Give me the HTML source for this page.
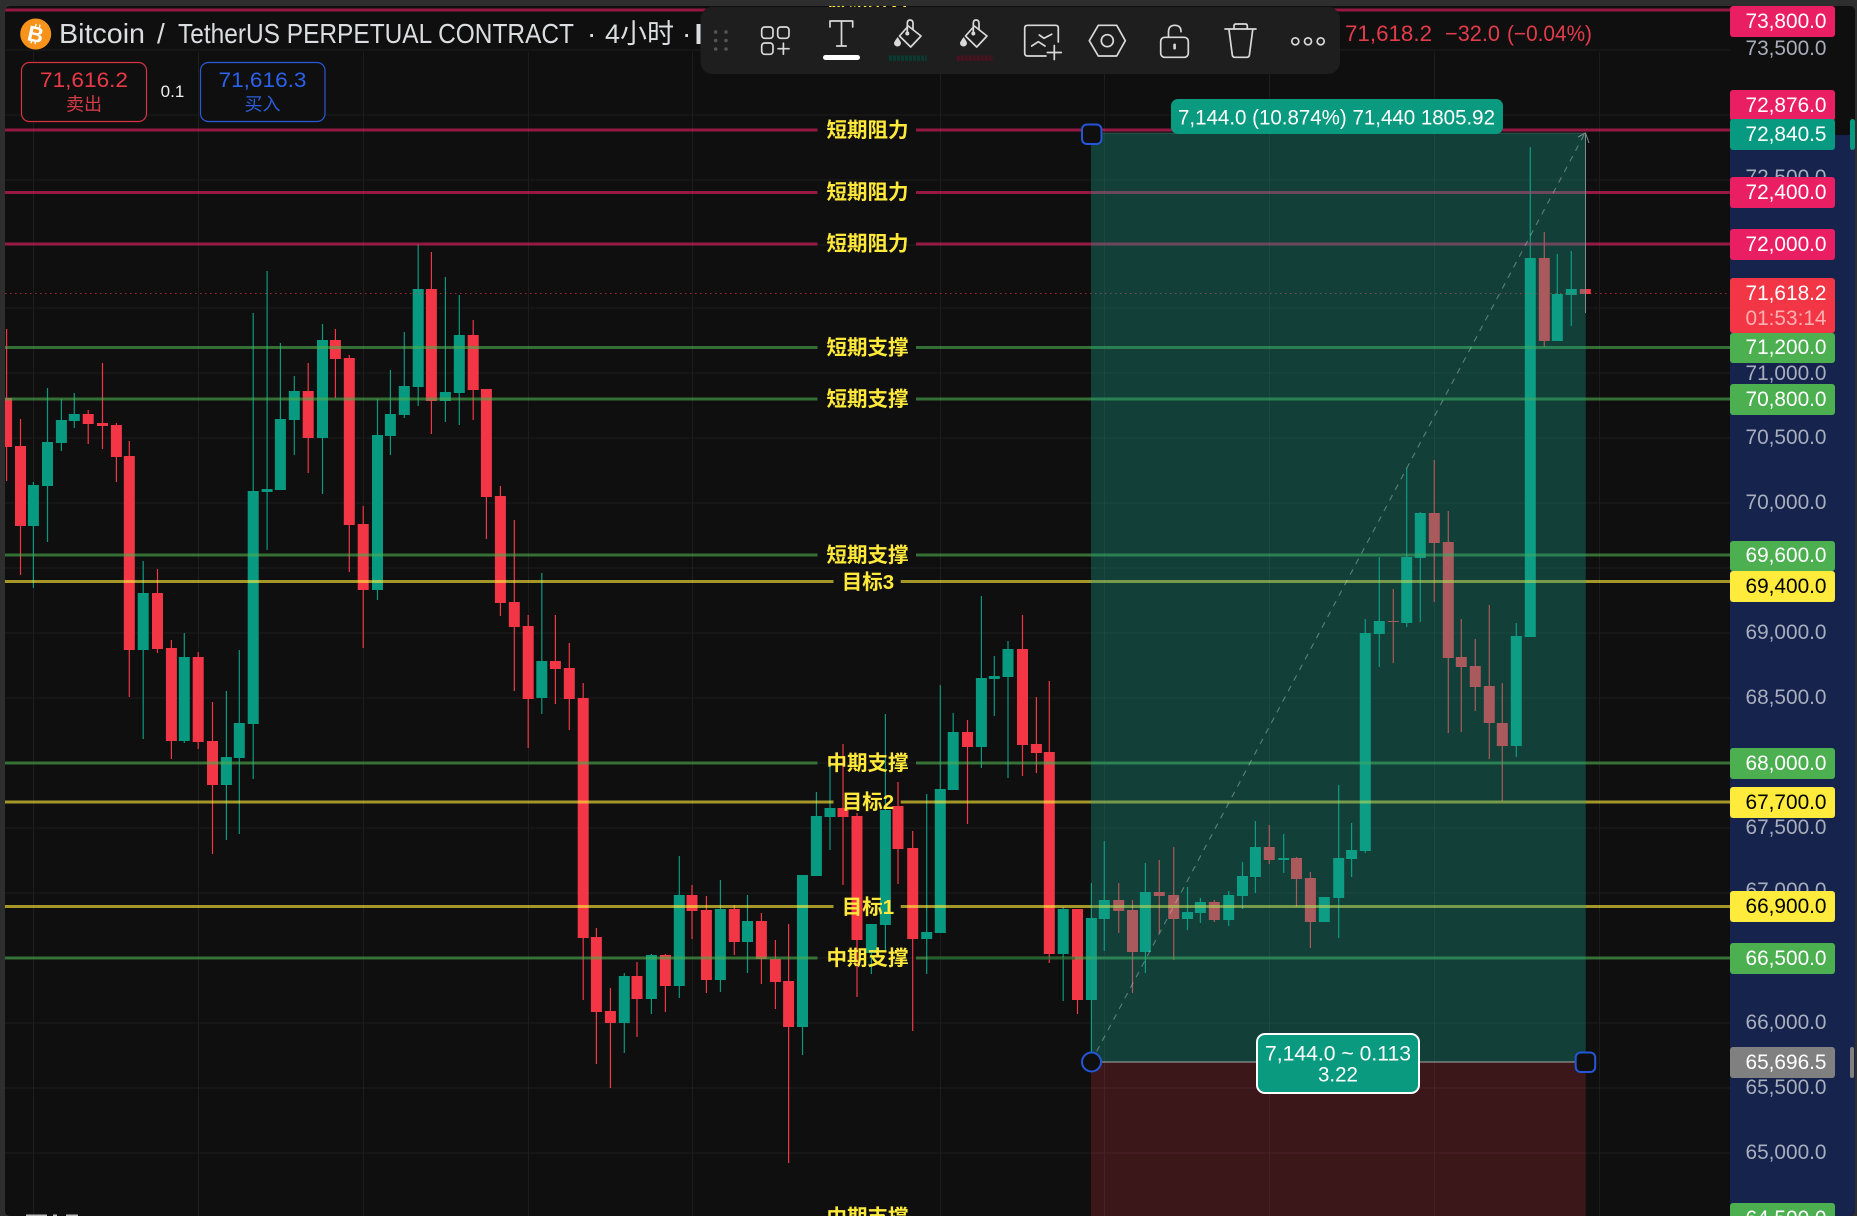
<!DOCTYPE html>
<html lang="zh">
<head>
<meta charset="utf-8">
<title>Bitcoin / TetherUS</title>
<style>
html,body{margin:0;padding:0;background:#2e2e2e;width:1857px;height:1216px;overflow:hidden}
svg{display:block;font-family:"Liberation Sans","Noto Sans CJK SC",sans-serif;filter:blur(.35px)}
.a{font-size:21.5px;fill:#a9aebd;text-anchor:middle}
.p{font-size:21.5px;fill:#fff;text-anchor:middle}
.k{fill:#000}
.l{font-size:20.5px;font-weight:bold;fill:#ffe93b;text-anchor:middle}
.i{fill:none;stroke:#d9d9d9;stroke-width:1.7;stroke-linecap:round;stroke-linejoin:round}
</style>
</head>
<body>
<svg width="1857" height="1216" viewBox="0 0 1857 1216" xmlns="http://www.w3.org/2000/svg">
<defs><clipPath id="c"><rect x="5" y="6" width="1850" height="1210" rx="5"/></clipPath></defs>
<rect width="1857" height="1216" fill="#2e2e2e"/>
<g clip-path="url(#c)">
<rect x="5" y="6" width="1850" height="1210" fill="#0f0f0f"/>
<rect x="1730" y="135" width="125" height="1081" fill="#15234d"/>

<!-- grid -->
<path fill="none" stroke="#ffffff" stroke-opacity=".06" stroke-width="1" d="M5 50H1730M5 115H1730M5 180H1730M5 245H1730M5 308H1730M5 373H1730M5 438H1730M5 503H1730M5 568H1730M5 633H1730M5 698H1730M5 763H1730M5 828H1730M5 893H1730M5 958H1730M5 1023H1730M5 1088H1730M5 1153H1730M33.5 52V1216M198.5 52V1216M363.5 52V1216M528.5 52V1216M692.5 52V1216M940.5 52V1216M1104.5 52V1216M1269.5 52V1216M1434.5 52V1216M1599.5 52V1216"/>

<!-- red wicks -->
<path fill="none" stroke="#f23645" stroke-width="1.2" d="M6.6 329V481M20.5 419V575M88.2 410V444M102.5 363V449M116.4 423V482M129.3 441V697M157.5 569V653M171.4 640V759M198.2 652V749M212.5 702V854M308.2 363V473M335.4 329V398M349.3 355V572M363.2 506V648M431.4 252V434M473.2 320V420M486.4 389V539M500.4 486V616M514.3 520V691M528.2 615V748M555.4 615V704M569.3 643V730M583.2 683V1000M596.4 928V1064M610.4 988V1088M637 962V1037M665.4 954V1012M692 885V939M706.4 896V993M734.3 905V955M761.4 913V984M775.4 940V1009M788.6 924V1163M843 744V885M857 813V997M898 782V884M912.7 831V1031M967.5 720V824M1022.5 615V776M1036.4 697V773M1049.3 681V963M1077.5 909V1014M1118.7 883V933M1132.5 900V993M1159.3 860V933M1173.7 847V960M1214.3 900V922M1269.3 825V864M1296.5 857V907M1310.4 872V948M1393.3 589V663M1434.3 460V602M1448.3 511V733M1461.3 619V732M1475.3 639V711M1489.3 605V759M1502.3 683V801M1544.3 232V347"/>
<!-- red bodies -->
<path fill="none" stroke="#f23645" stroke-width="11" d="M6.6 398V447M20.5 446V526M88.2 414V424M102.5 423V426M116.4 425V457M129.3 456V650M157.5 593V649M171.4 648V741M198.2 657V742M212.5 741V785M308.2 391V438M335.4 340V359M349.3 358V525M363.2 524V590M431.4 289V401M473.2 335V390M486.4 389V497M500.4 496V603M514.3 602V627M528.2 626V699M555.4 661V669M569.3 668V699M583.2 698V938M596.4 937V1012M610.4 1011V1023M637 976V999M665.4 955V986M692 895V911M706.4 910V980M734.3 909V942M761.4 921V959M775.4 959V982M788.6 981V1027M843 808V817M857 816V940M898 806V849M912.7 848V939M967.5 732V747M1022.5 649V745M1036.4 744V753M1049.3 752V954M1077.5 909V1000M1118.7 900V911M1132.5 910V952M1159.3 892V896M1173.7 895V919M1214.3 902V920M1269.3 847V860M1296.5 858V879M1310.4 878V922M1393.3 621V622M1434.3 513V543M1448.3 542V658M1461.3 657V667M1475.3 666V687M1489.3 686V723M1502.3 723V746M1544.3 258V341M1585.3 289V294"/>
<!-- green wicks -->
<path fill="none" stroke="#089981" stroke-width="1.2" d="M33.4 482V588M47.5 388V542M61.4 399V451M74.3 393V428M143.2 561V739M184.3 633V743M226.4 691V840M239.3 650V834M253.2 313V779M267.1 271V550M280.4 343V490M294.3 376V455M322.5 324V494M377.5 399V600M390.4 370V455M404.3 332V418M418.2 244V406M445.4 277V422M459.3 295V425M541.8 573V714M624.3 973V1053M651.4 954V1014M679.3 856V998M720.4 880V992M747.5 895V973M802.5 875V1055M816.4 792V876M830 758V850M871.4 924V974M885.4 714V950M926.7 794V974M940.3 685V933M953.2 713V790M981.4 596V768M994.3 656V716M1008 641V778M1063.2 907V1001M1091.4 883V1053M1104.3 841V951M1145.4 863V973M1187.5 887V930M1200.4 898V923M1228.7 891V926M1242.5 862V909M1255.4 821V893M1283.7 834V873M1338.7 785V938M1351.6 823V877M1365.3 619V853M1379.3 557V667M1406.7 468V627M1420.3 512V622M1516.3 623V757M1530.3 147V637M1557.3 254V341M1571.3 251V326"/>
<!-- green bodies -->
<path fill="none" stroke="#089981" stroke-width="11" d="M33.4 485V526M47.5 442V486M61.4 420V443M74.3 414V421M143.2 593V650M184.3 657V741M226.4 757V785M239.3 723V758M253.2 491V724M267.1 489V492M280.4 419V490M294.3 391V420M322.5 340V438M377.5 435V590M390.4 414V436M404.3 386V415M418.2 289V387M445.4 392V401M459.3 335V393M541.8 661V698M624.3 976V1023M651.4 955V999M679.3 895V986M720.4 909V980M747.5 921V942M802.5 875V1027M816.4 816V876M830 808V817M871.4 924V953M885.4 810V925M926.7 932V939M940.3 789V933M953.2 732V790M981.4 678V747M994.3 676V679M1008 649V677M1063.2 909V954M1091.4 918V1000M1104.3 900V919M1145.4 892V952M1187.5 912V919M1200.4 902V913M1228.7 895V920M1242.5 876V896M1255.4 847V877M1283.7 858V860M1324.3 897V922M1338.7 858V898M1351.6 850V859M1365.3 633V851M1379.3 621V634M1406.7 557V623M1420.3 513V558M1516.3 636V746M1530.3 258V637M1557.3 294V341M1571.3 289V295"/>

<!-- dotted last price line -->
<path d="M5 293.5H1730" stroke="#f23645" stroke-opacity=".65" stroke-width="1" stroke-dasharray="1.5 3.5"/>

<!-- horizontal levels -->
<path fill="none" stroke="#e91e63" stroke-opacity=".62" stroke-width="3" d="M5 10H1730M5 130H817.5M916 130H1730M5 192.5H817.5M916 192.5H1730M5 244H817.5M916 244H1730"/>
<path fill="none" stroke="#4caf50" stroke-opacity=".6" stroke-width="3" d="M5 347.5H817.5M916 347.5H1730M5 399H817.5M916 399H1730M5 555H817.5M916 555H1730M5 763H817.5M916 763H1730M5 958H817.5M916 958H1730"/>
<path fill="none" stroke="#ffeb3b" stroke-opacity=".62" stroke-width="3" d="M5 581.5H833.5M900.7 581.5H1730M5 802H833.5M900.7 802H1730M5 906.5H833.5M900.7 906.5H1730"/>
<path d="M928 958.5H1075" stroke="#0a3a20" stroke-opacity=".35" stroke-width="3"/>

<!-- long/short position overlay -->
<rect x="1091" y="133" width="494.7" height="929" fill="#18a48b" fill-opacity=".33"/>
<rect x="1091" y="1062" width="494.7" height="154" fill="#f23645" fill-opacity=".2"/>
<path d="M1091 1062L1585 133" fill="none" stroke="#c6d6d2" stroke-opacity=".42" stroke-width="1.1" stroke-dasharray="6 6"/>
<path d="M1578 137L1585.5 133L1589 143M1585.5 133V313" fill="none" stroke="#7d8c88" stroke-width="1"/>
<path d="M1091 133H1585" stroke="#9aa8a4" stroke-opacity=".25" stroke-width="1"/>
<path d="M1091 1062H1585.5" stroke="#a8a8a8" stroke-width="1"/>

<!-- level labels -->
<text class="l" x="867.5" y="9">短期阻力</text>
<text class="l" x="867.5" y="137">短期阻力</text>
<text class="l" x="867.5" y="199">短期阻力</text>
<text class="l" x="867.5" y="250.5">短期阻力</text>
<text class="l" x="867.5" y="354.5">短期支撑</text>
<text class="l" x="867.5" y="406">短期支撑</text>
<text class="l" x="867.5" y="562">短期支撑</text>
<text class="l" x="868" y="589">目标3</text>
<text class="l" x="867.5" y="770">中期支撑</text>
<text class="l" x="868" y="809">目标2</text>
<text class="l" x="868" y="914">目标1</text>
<text class="l" x="867.5" y="965">中期支撑</text>
<text class="l" x="867.5" y="1224">中期支撑</text>

<!-- header -->
<circle cx="35.7" cy="34" r="15.5" fill="#f7931a"/>
<text x="35.7" y="42" font-size="22" font-weight="bold" fill="#fff" text-anchor="middle" transform="rotate(12 35.7 34)">B</text>
<path d="M34 24v3M38 24v3M33 41v3M37 41v3" stroke="#fff" stroke-width="1.4" transform="rotate(12 35.7 34)"/>
<text x="59" y="43" font-size="28" fill="#dcdde0" textLength="86" lengthAdjust="spacingAndGlyphs">Bitcoin</text>
<text x="157" y="43" font-size="28" fill="#dcdde0">/</text>
<text x="178" y="43" font-size="28" fill="#dcdde0" textLength="396" lengthAdjust="spacingAndGlyphs">TetherUS PERPETUAL CONTRACT</text>
<text x="587" y="43" font-size="28" fill="#dcdde0">·</text>
<text x="605" y="43" font-size="27" fill="#dcdde0" textLength="69" lengthAdjust="spacingAndGlyphs">4小时</text>
<text x="682" y="43" font-size="28" fill="#dcdde0">·</text>
<rect x="696.5" y="24" width="4" height="20" fill="#dcdde0"/>

<rect x="21.5" y="62.5" width="125" height="59" rx="8" fill="#0f0f0f" stroke="#d6323f" stroke-width="1.2"/>
<text x="84" y="87" font-size="21.5" fill="#ea3a48" text-anchor="middle" textLength="88" lengthAdjust="spacingAndGlyphs">71,616.2</text>
<text x="84" y="110.5" font-size="18" fill="#d23a46" text-anchor="middle">卖出</text>
<text x="172.5" y="97" font-size="17" fill="#efefef" text-anchor="middle">0.1</text>
<rect x="200.5" y="62.5" width="124.5" height="59" rx="8" fill="#0f0f0f" stroke="#2a59d8" stroke-width="1.2"/>
<text x="262.5" y="87" font-size="21.5" fill="#2b62ea" text-anchor="middle" textLength="88" lengthAdjust="spacingAndGlyphs">71,616.3</text>
<text x="262.5" y="110.5" font-size="18" fill="#2b5fd9" text-anchor="middle">买入</text>

<text x="1345" y="41" font-size="22" fill="#e23c4b" textLength="87" lengthAdjust="spacingAndGlyphs">71,618.2</text>
<text x="1445" y="41" font-size="22" fill="#e23c4b" textLength="55" lengthAdjust="spacingAndGlyphs">−32.0</text>
<text x="1507" y="41" font-size="22" fill="#e23c4b" textLength="85" lengthAdjust="spacingAndGlyphs">(−0.04%)</text>

<!-- toolbar -->
<rect x="700.5" y="7" width="639.5" height="67" rx="12" fill="#1e1e1e"/>
<g fill="#555">
<circle cx="715.7" cy="32" r="1.8"/><circle cx="726" cy="32" r="1.8"/>
<circle cx="715.7" cy="40.5" r="1.8"/><circle cx="726" cy="40.5" r="1.8"/>
<circle cx="715.7" cy="49" r="1.8"/><circle cx="726" cy="49" r="1.8"/>
</g>
<g class="i">
<rect x="761.7" y="27" width="11.3" height="11.3" rx="3"/>
<rect x="777.7" y="27" width="11.3" height="11.3" rx="3"/>
<rect x="761.7" y="43" width="11.3" height="11.3" rx="3"/>
<path d="M778 48.7H789M783.4 43.2V54.2"/>
<path d="M830 27V21H852.7V27M841.5 21V46M836.7 46H846.2"/>
<!-- bucket 1 -->
<path d="M908.3 26L921 36L910.7 47L899.5 36Z"/>
<path d="M907.3 33V23.5Q907.3 20 910 20Q913 20 913 23.5V29"/>
<!-- bucket 2 -->
<path d="M974.3 26L987 36L976.7 47L965.5 36Z"/>
<path d="M973.3 33V23.5Q973.3 20 976 20Q979 20 979 23.5V29"/>
<!-- chart plus -->
<path d="M1058.3 42V28Q1058.3 25.3 1055.5 25.3H1027.7Q1024.7 25.3 1024.7 28V53Q1024.7 56 1027.7 56H1046"/>
<path d="M1039.3 35L1044 38.3L1051.7 34.3M1031.7 46L1038.3 41.7L1045 46M1054.3 45.5V59.5M1047.3 52.5H1061.3"/>
<!-- hexagon -->
<path d="M1089.3 40.7L1098.3 25.3H1116.7L1125.3 40.7L1116.7 56H1098.3Z"/>
<circle cx="1107.3" cy="40.7" r="6"/>
<!-- unlock -->
<rect x="1160.7" y="37.3" width="27.6" height="20" rx="4"/>
<path d="M1168.5 37V32Q1168.5 25.3 1174.8 25.3Q1181 25.3 1181 31.7"/>
<!-- trash -->
<path d="M1225 29H1256M1234 28V26Q1234 24 1236 24H1245.3Q1247.3 24 1247.3 26V28M1229 30L1232.3 55Q1232.6 57.3 1235 57.3H1246.7Q1249 57.3 1249.4 55L1252.7 30"/>
<!-- more -->
<circle cx="1295.3" cy="41.3" r="3.5"/><circle cx="1308" cy="41.3" r="3.5"/><circle cx="1320.7" cy="41.3" r="3.5"/>
</g>
<circle cx="907.3" cy="33.5" r="2" fill="#d9d9d9"/>
<circle cx="973.3" cy="33.5" r="2" fill="#d9d9d9"/>
<path d="M897.7 37Q894 42 894 43A3.5 3.5 0 0 0 901 43Q901 42 897.7 37Z" fill="#d9d9d9"/>
<path d="M963.7 37Q960 42 960 43A3.5 3.5 0 0 0 967 43Q967 42 963.7 37Z" fill="#d9d9d9"/>
<rect x="823" y="55" width="37" height="5" rx="2.5" fill="#fff"/>
<path d="M889 58.3H926.7" stroke="#093a2f" stroke-width="5.5" stroke-dasharray="3 1"/>
<path d="M956.7 58.3H993.3" stroke="#4a1220" stroke-width="5.5" stroke-dasharray="3 1"/>
<rect x="1173.3" y="43.5" width="2.6" height="6" rx="1.3" fill="#d9d9d9"/>

<!-- measure labels and handles -->
<rect x="1171" y="99" width="332" height="35" rx="7" fill="#0a9a80"/>
<text x="1178" y="124.5" font-size="21.5" fill="#fff" textLength="317" lengthAdjust="spacingAndGlyphs">7,144.0 (10.874%) 71,440 1805.92</text>
<rect x="1082" y="124.5" width="19.5" height="19.5" rx="5" fill="#0f0f0f" stroke="#2456d8" stroke-width="2"/>
<circle cx="1091.5" cy="1062" r="9.5" fill="#0f0f0f" stroke="#2456d8" stroke-width="2"/>
<rect x="1575.7" y="1052.5" width="19.5" height="19.5" rx="5" fill="#0f0f0f" stroke="#2456d8" stroke-width="2"/>
<rect x="1257" y="1034" width="162" height="59" rx="8" fill="#0a9a80" stroke="#fff" stroke-width="2"/>
<text x="1338" y="1060.5" font-size="21.5" fill="#fff" text-anchor="middle" textLength="146" lengthAdjust="spacingAndGlyphs">7,144.0 ~ 0.113</text>
<text x="1338" y="1081.5" font-size="21.5" fill="#fff" text-anchor="middle" textLength="40" lengthAdjust="spacingAndGlyphs">3.22</text>

<!-- axis ticks -->
<text class="a" x="1786" y="55" textLength="81" lengthAdjust="spacingAndGlyphs">73,500.0</text>
<text class="a" x="1786" y="184" textLength="81" lengthAdjust="spacingAndGlyphs">72,500.0</text>
<text class="a" x="1786" y="380" textLength="81" lengthAdjust="spacingAndGlyphs">71,000.0</text>
<text class="a" x="1786" y="444" textLength="81" lengthAdjust="spacingAndGlyphs">70,500.0</text>
<text class="a" x="1786" y="509" textLength="81" lengthAdjust="spacingAndGlyphs">70,000.0</text>
<text class="a" x="1786" y="639" textLength="81" lengthAdjust="spacingAndGlyphs">69,000.0</text>
<text class="a" x="1786" y="704" textLength="81" lengthAdjust="spacingAndGlyphs">68,500.0</text>
<text class="a" x="1786" y="834" textLength="81" lengthAdjust="spacingAndGlyphs">67,500.0</text>
<text class="a" x="1786" y="897" textLength="81" lengthAdjust="spacingAndGlyphs">67,000.0</text>
<text class="a" x="1786" y="1029" textLength="81" lengthAdjust="spacingAndGlyphs">66,000.0</text>
<text class="a" x="1786" y="1094" textLength="81" lengthAdjust="spacingAndGlyphs">65,500.0</text>
<text class="a" x="1786" y="1159" textLength="81" lengthAdjust="spacingAndGlyphs">65,000.0</text>

<!-- axis pills -->
<rect x="1730" y="6" width="105" height="31" rx="3" fill="#e91e63"/><text class="p" x="1786" y="28" textLength="81" lengthAdjust="spacingAndGlyphs">73,800.0</text>
<rect x="1730" y="90" width="105" height="31" rx="3" fill="#e91e63"/><text class="p" x="1786" y="112" textLength="81" lengthAdjust="spacingAndGlyphs">72,876.0</text>
<rect x="1730" y="119" width="105" height="31" rx="3" fill="#089981"/><text class="p" x="1786" y="141" textLength="81" lengthAdjust="spacingAndGlyphs">72,840.5</text>
<rect x="1730" y="177" width="105" height="31" rx="3" fill="#e91e63"/><text class="p" x="1786" y="199" textLength="81" lengthAdjust="spacingAndGlyphs">72,400.0</text>
<rect x="1730" y="229" width="105" height="31" rx="3" fill="#e91e63"/><text class="p" x="1786" y="251" textLength="81" lengthAdjust="spacingAndGlyphs">72,000.0</text>
<rect x="1730" y="278" width="105" height="55" rx="3" fill="#f23645"/><text class="p" x="1786" y="300" textLength="81" lengthAdjust="spacingAndGlyphs">71,618.2</text><text class="p" x="1786" y="325" style="fill:#ffb0b0" textLength="81" lengthAdjust="spacingAndGlyphs">01:53:14</text>
<rect x="1730" y="333" width="105" height="30" rx="3" fill="#4caf50"/><text class="p" x="1786" y="354" textLength="81" lengthAdjust="spacingAndGlyphs">71,200.0</text>
<rect x="1730" y="384" width="105" height="31" rx="3" fill="#4caf50"/><text class="p" x="1786" y="406" textLength="81" lengthAdjust="spacingAndGlyphs">70,800.0</text>
<rect x="1730" y="541" width="105" height="30" rx="3" fill="#4caf50"/><text class="p" x="1786" y="562" textLength="81" lengthAdjust="spacingAndGlyphs">69,600.0</text>
<rect x="1730" y="571" width="105" height="31" rx="3" fill="#ffeb3b"/><text class="p k" x="1786" y="593" textLength="81" lengthAdjust="spacingAndGlyphs">69,400.0</text>
<rect x="1730" y="748" width="105" height="31" rx="3" fill="#4caf50"/><text class="p" x="1786" y="770" textLength="81" lengthAdjust="spacingAndGlyphs">68,000.0</text>
<rect x="1730" y="787" width="105" height="31" rx="3" fill="#ffeb3b"/><text class="p k" x="1786" y="809" textLength="81" lengthAdjust="spacingAndGlyphs">67,700.0</text>
<rect x="1730" y="891" width="105" height="31" rx="3" fill="#ffeb3b"/><text class="p k" x="1786" y="913" textLength="81" lengthAdjust="spacingAndGlyphs">66,900.0</text>
<rect x="1730" y="943" width="105" height="31" rx="3" fill="#4caf50"/><text class="p" x="1786" y="965" textLength="81" lengthAdjust="spacingAndGlyphs">66,500.0</text>
<rect x="1730" y="1047" width="105" height="31" rx="3" fill="#808080"/><text class="p" x="1786" y="1069" textLength="81" lengthAdjust="spacingAndGlyphs">65,696.5</text>
<rect x="1730" y="1203" width="105" height="31" rx="3" fill="#4caf50"/><text class="p" x="1786" y="1225" textLength="81" lengthAdjust="spacingAndGlyphs">64,500.0</text>

<!-- scrollbar marks -->
<rect x="1850" y="119" width="5" height="31" rx="2.5" fill="#089981"/>
<rect x="1850" y="1047" width="4" height="31" rx="2" fill="#808080"/>

<!-- bottom left remnant -->
<rect x="26" y="1214.5" width="21" height="2" fill="#bbb"/>
<rect x="53" y="1214.5" width="4" height="2" fill="#bbb"/>
<rect x="66" y="1214.5" width="12" height="2" fill="#bbb"/>
</g>
</svg>
</body>
</html>
